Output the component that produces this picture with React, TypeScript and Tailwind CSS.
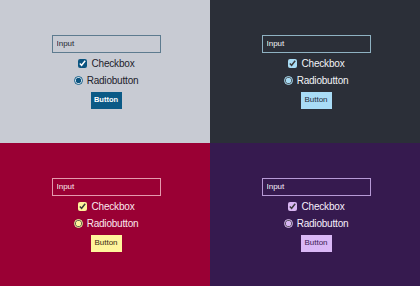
import React from 'react';

type Theme = {
  bg: string;
  input: string;
  text: string;
  accent: string;
  button: string;
};

const themes: Theme[] = [
  {
    bg: 'bg-[#c8cbd3]',
    input: 'border-[#5d7b8f] text-[#1f2430]',
    text: 'text-[#1c212b]',
    accent: 'accent-[#0b5480]',
    button: 'bg-[#0b5a86] text-white font-bold text-[7.5px]',
  },
  {
    bg: 'bg-[#2b2f38]',
    input: 'border-[#8fb2c2] text-[#f2f4f7]',
    text: 'text-[#f2f4f7]',
    accent: 'accent-[#a9dcf5]',
    button: 'bg-[#a9dcf6] text-[#1d2a38] text-[8px]',
  },
  {
    bg: 'bg-[#9a0034]',
    input: 'border-[#e59aae] text-[#fbe9ee]',
    text: 'text-[#fbe9ee]',
    accent: 'accent-[#fff29c]',
    button: 'bg-[#fff59c] text-[#3a2a10] text-[8px]',
  },
  {
    bg: 'bg-[#361a4f]',
    input: 'border-[#b79ad6] text-[#f6effc]',
    text: 'text-[#f6effc]',
    accent: 'accent-[#d9b6f3]',
    button: 'bg-[#dab8f6] text-[#3a2052] text-[8px]',
  },
];

const Panel = ({ theme, id }: { theme: Theme; id: number }) => (
  <div className={`flex items-center justify-center ${theme.bg}`}>
    <div className="flex flex-col items-center pl-[2px]" style={{ fontFamily: '"Liberation Sans", Arial, sans-serif' }}>
      <input
        className={`w-[109px] h-[18px] border bg-transparent px-1 text-[8px] outline-none ${theme.input}`}
        defaultValue="Input"
      />
      <label className={`mt-[3px] h-[16px] flex items-center gap-[5px] text-[10px] tracking-[-0.2px] ${theme.text}`}>
        <input type="checkbox" defaultChecked className={`m-0 w-[9px] h-[9px] ${theme.accent}`} />
        Checkbox
      </label>
      <label className={`h-[17px] flex items-center gap-[4px] text-[10px] tracking-[-0.2px] ${theme.text}`}>
        <input type="radio" name={`r${id}`} defaultChecked className={`m-0 w-[9px] h-[9px] ${theme.accent}`} />
        Radiobutton
      </label>
      <button className={`mt-[3px] w-[31px] h-[17px] flex items-center justify-center ${theme.button}`}>
        Button
      </button>
    </div>
  </div>
);

export default function App() {
  return (
    <div className="grid grid-cols-2 grid-rows-2 w-[420px] h-[286px]">
      {themes.map((t, i) => (
        <Panel key={i} theme={t} id={i} />
      ))}
    </div>
  );
}
